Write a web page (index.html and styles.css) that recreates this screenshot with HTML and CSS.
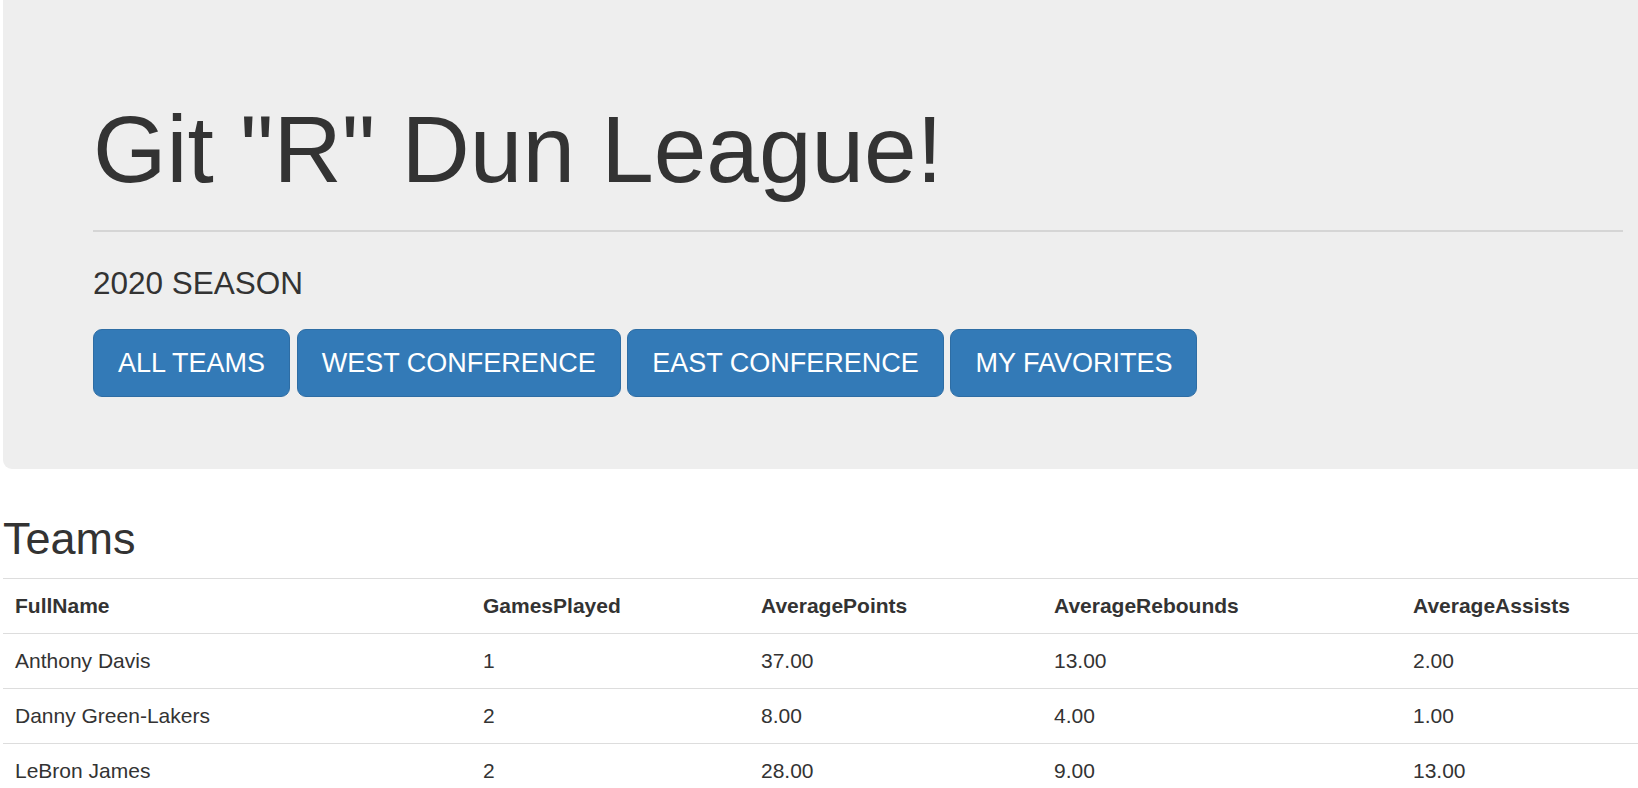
FILE: index.html
```html
<!DOCTYPE html>
<html lang="en">
<head>
<meta charset="utf-8">
<title>Git "R" Dun League!</title>
<link rel="stylesheet" href="styles.css">
</head>
<body>
<div class="page">
  <div class="jumbotron">
    <h1 class="title">Git "R" Dun League!</h1>
    <hr class="rule">
    <p class="season">2020 SEASON</p>
    <div class="actions">
      <a class="btn" href="#">ALL TEAMS</a>
      <a class="btn" href="#">WEST CONFERENCE</a>
      <a class="btn" href="#">EAST CONFERENCE</a>
      <a class="btn" href="#">MY FAVORITES</a>
    </div>
  </div>

  <h2 class="section-title">Teams</h2>
  <table class="table">
    <colgroup>
      <col class="col-name">
      <col class="col-games">
      <col class="col-points">
      <col class="col-rebounds">
      <col class="col-assists">
    </colgroup>
    <tbody>
      <tr>
        <th>FullName</th>
        <th>GamesPlayed</th>
        <th>AveragePoints</th>
        <th>AverageRebounds</th>
        <th>AverageAssists</th>
      </tr>
      <tr>
        <td>Anthony Davis</td>
        <td>1</td>
        <td>37.00</td>
        <td>13.00</td>
        <td>2.00</td>
      </tr>
      <tr>
        <td>Danny Green-Lakers</td>
        <td>2</td>
        <td>8.00</td>
        <td>4.00</td>
        <td>1.00</td>
      </tr>
      <tr>
        <td>LeBron James</td>
        <td>2</td>
        <td>28.00</td>
        <td>9.00</td>
        <td>13.00</td>
      </tr>
    </tbody>
  </table>
</div>
</body>
</html>
```

FILE: styles.css
```css
html, body {
  margin: 0;
  padding: 0;
}

body {
  font-family: "Liberation Sans", Arial, Helvetica, sans-serif;
  font-size: 21px;
  line-height: 30px;
  color: #333;
  background: #fff;
  overflow: hidden;
}

.page {
  width: 1710px;
  margin-left: 3px;
}

.jumbotron {
  background: #eee;
  padding: 67px 90px 72px;
  border-radius: 0 0 9px 9px;
  margin-bottom: 45px;
}

.title {
  font-size: 94.5px;
  line-height: 104px;
  font-weight: normal;
  margin: 30px 0 15px;
}

.rule {
  border: 0;
  border-top: 2px solid #d5d5d5;
  height: 0;
  margin: 29px 0;
}

.season {
  font-size: 31.5px;
  line-height: 45px;
  margin: 0 0 22.5px;
}

.actions {
  display: flex;
  gap: 6.6px;
}

.btn {
  display: inline-block;
  font-size: 27px;
  line-height: 36px;
  padding: 15px 24px;
  border: 1px solid #2e6da4;
  border-radius: 9px;
  background: #337ab7;
  color: #fff;
  text-decoration: none;
  white-space: nowrap;
}

.section-title {
  font-size: 45px;
  line-height: 49.5px;
  font-weight: normal;
  margin: 0 0 15px;
}

.table {
  width: 1710px;
  border-collapse: collapse;
  border-spacing: 0;
  table-layout: fixed;
}

.col-name { width: 468px; }
.col-games { width: 278px; }
.col-points { width: 293px; }
.col-rebounds { width: 359px; }
.col-assists { width: 312px; }

.table th,
.table td {
  padding: 12px;
  line-height: 30px;
  border-top: 1px solid #ddd;
  text-align: left;
  vertical-align: top;
}

.table th {
  font-weight: bold;
}
```
